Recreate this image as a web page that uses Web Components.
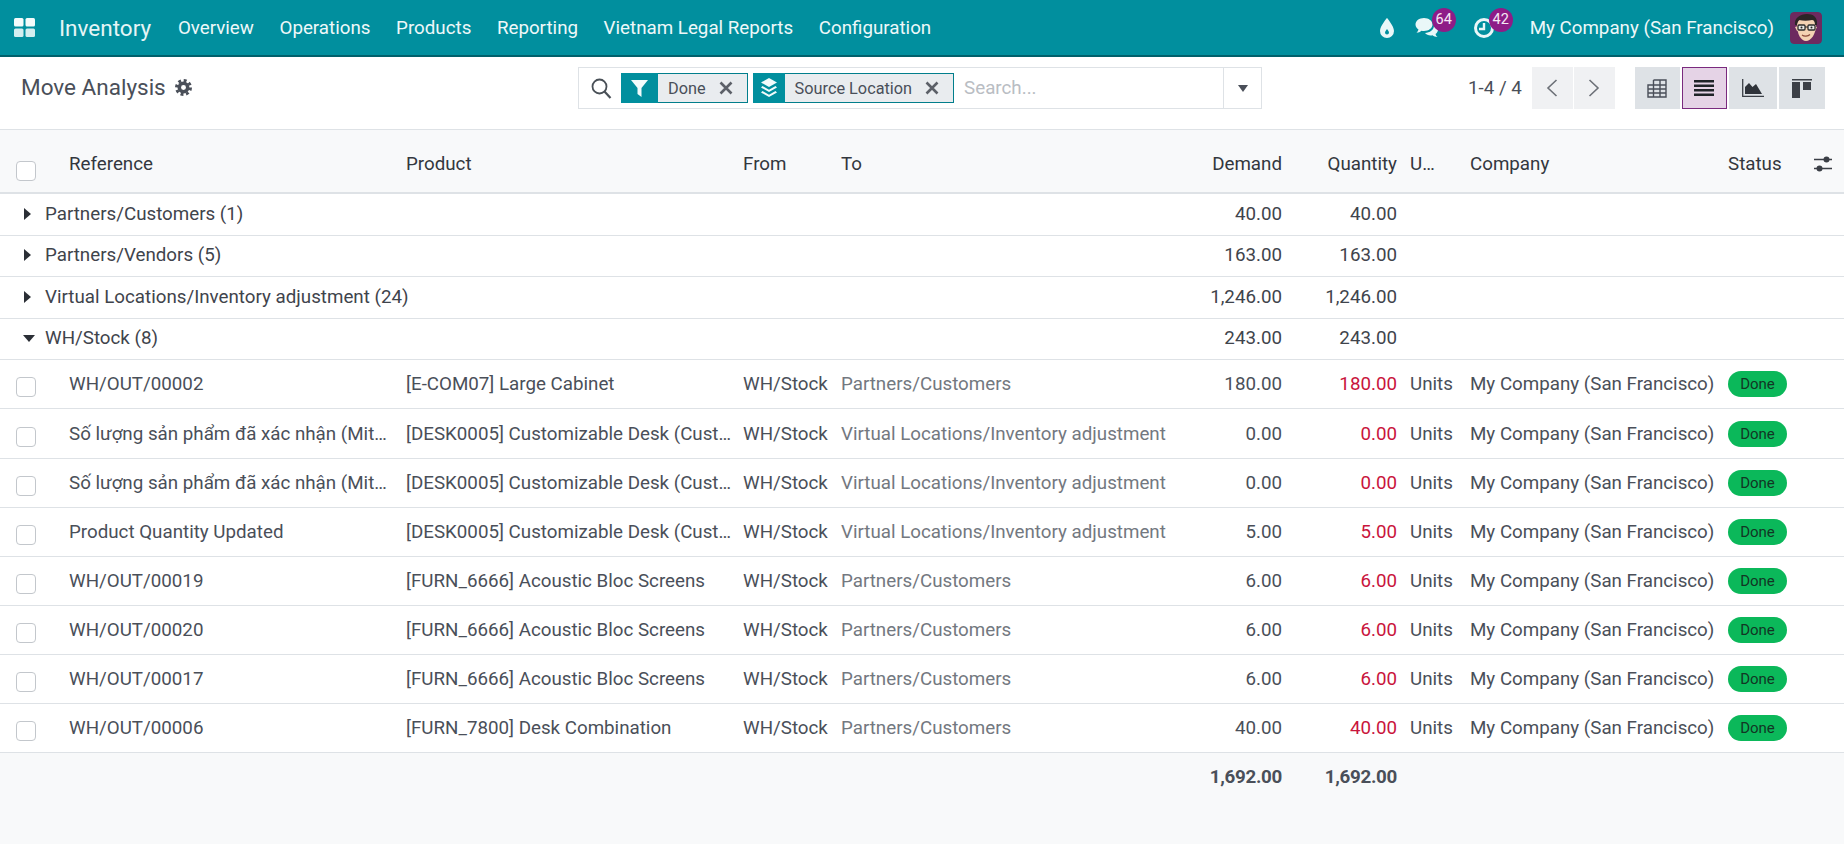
<!DOCTYPE html>
<html>
<head>
<meta charset="utf-8">
<title>Move Analysis</title>
<style>
    html, body { margin: 0; height: 100%; }
    body { font-family: Roboto, "Liberation Sans", sans-serif; color: #4a4f59; background: #fff; }
    #page { display: flex; flex-direction: column; height: 100vh; overflow: hidden; }
</style>
</head>
<body>
<div id="page">
    <app-navbar></app-navbar>
    <control-panel></control-panel>
    <move-list>
        <list-header></list-header>
        <group-row name="Partners/Customers (1)" demand="40.00" quantity="40.00"></group-row>
        <group-row name="Partners/Vendors (5)" demand="163.00" quantity="163.00"></group-row>
        <group-row name="Virtual Locations/Inventory adjustment (24)" demand="1,246.00" quantity="1,246.00"></group-row>
        <group-row name="WH/Stock (8)" demand="243.00" quantity="243.00" open></group-row>
        <move-row ref="WH/OUT/00002" product="[E-COM07] Large Cabinet" to="Partners/Customers" demand="180.00"></move-row>
        <move-row ref="Số lượng sản phẩm đã xác nhận (Mit…" product="[DESK0005] Customizable Desk (Cust…" to="Virtual Locations/Inventory adjustment" demand="0.00"></move-row>
        <move-row ref="Số lượng sản phẩm đã xác nhận (Mit…" product="[DESK0005] Customizable Desk (Cust…" to="Virtual Locations/Inventory adjustment" demand="0.00"></move-row>
        <move-row ref="Product Quantity Updated" product="[DESK0005] Customizable Desk (Cust…" to="Virtual Locations/Inventory adjustment" demand="5.00"></move-row>
        <move-row ref="WH/OUT/00019" product="[FURN_6666] Acoustic Bloc Screens" to="Partners/Customers" demand="6.00"></move-row>
        <move-row ref="WH/OUT/00020" product="[FURN_6666] Acoustic Bloc Screens" to="Partners/Customers" demand="6.00"></move-row>
        <move-row ref="WH/OUT/00017" product="[FURN_6666] Acoustic Bloc Screens" to="Partners/Customers" demand="6.00"></move-row>
        <move-row ref="WH/OUT/00006" product="[FURN_7800] Desk Combination" to="Partners/Customers" demand="40.00"></move-row>
        <list-footer demand="1,692.00" quantity="1,692.00"></list-footer>
    </move-list>
</div>

<template id="navbar-template">
    <style>
        :host { display: flex; align-items: center; height: 55px; flex: none; background: #018f9e; border-bottom: 2px solid #00606b; color: #eef8f9; font-size: 18.75px; }
        .apps { display: block; margin-left: 14px; margin-right: 24px; }
        .brand { font-size: 22.5px; margin-right: 26.8px; color: #e6f5f6; }
        .item { margin-right: 25.6px; white-space: nowrap; }
        .right { margin-left: auto; display: flex; align-items: center; }
        .ico { position: relative; display: flex; }
        .badge { position: absolute; top: -9px; width: 24px; height: 24px; border-radius: 50%; background: #8e1c87; color: #f6e9f5; font-size: 14.5px; display: flex; align-items: center; justify-content: center; }
        .company { white-space: nowrap; margin-left: 35px; margin-right: 16px; }
        .avatar { display: block; margin-right: 22px; border-radius: 4px; }
    </style>
    <svg class="apps" width="21" height="19" viewBox="0 0 21 19">
        <rect x="0" y="0" width="9.5" height="8.5" rx="1.5" fill="#f4fbfb"/>
        <rect x="11.5" y="0" width="9.5" height="8.5" rx="1.5" fill="#f4fbfb"/>
        <rect x="0" y="10.5" width="9.5" height="8.5" rx="1.5" fill="#d3eef0"/>
        <rect x="11.5" y="10.5" width="9.5" height="8.5" rx="1.5" fill="#d3eef0"/>
    </svg>
    <span class="brand">Inventory</span>
    <span class="item">Overview</span>
    <span class="item">Operations</span>
    <span class="item">Products</span>
    <span class="item">Reporting</span>
    <span class="item">Vietnam Legal Reports</span>
    <span class="item">Configuration</span>
    <div class="right">
        <span class="ico" style="margin-right:20px">
            <svg width="16" height="20" viewBox="0 0 16 20">
                <path fill-rule="evenodd" fill="#eaf7f8" d="M8 0C8 0 1 8 1 13a7 7 0 0 0 14 0C15 8 8 0 8 0zM8 11c-1 1.500-2 2.500-2 3.500a2 2 0 0 0 4 0C10 13.500 9 12.500 8 11z"/>
            </svg>
        </span>
        <span class="ico" style="margin-right:34px">
            <svg width="24" height="22" viewBox="0 0 24 22">
                <path fill="#eaf7f8" d="M9 1C4.300 1 .5 3.800.5 7.500c0 2 1.200 3.800 3 5-.3 1.300-1 2.400-2 3.200 2 0 3.800-.8 5-2 .8.200 1.600.3 2.500.3 4.700 0 8.500-2.900 8.500-6.500S13.700 1 9 1z"/>
                <path fill="#eaf7f8" d="M19 8.500c0 4.300-4.200 7.200-9 7.500 1.200 1.500 3.300 2.500 5.600 2.500.7 0 1.300-.1 1.900-.2 1.300 1.100 3 1.700 5 1.700-1-.8-1.700-1.800-2-3 1.500-1.100 2.500-2.600 2.500-4.300 0-1.700-1.600-3.400-4-4.200z"/>
            </svg>
            <span class="badge" style="left:17px">64</span>
        </span>
        <span class="ico">
            <svg width="22" height="22" viewBox="0 0 22 22">
                <circle cx="11" cy="11" r="8.500" fill="none" stroke="#eaf7f8" stroke-width="3"/>
                <path fill="none" stroke="#eaf7f8" stroke-width="2.400" d="M11 6v6H6"/>
            </svg>
            <span class="badge" style="left:16px">42</span>
        </span>
        <span class="company">My Company (San Francisco)</span>
        <svg class="avatar" width="32" height="32" viewBox="0 0 32 32">
            <rect width="32" height="32" rx="4" fill="#6d2a5f"/>
            <path fill="#f3d2b3" d="M7 13c0 9 4 16 9 16s10-7 10-16c0-5-4-7-9-7s-10 2-10 7z"/>
            <path fill="#f3d2b3" d="M5 15l3-1 1 5-2 0zM27 15l-3-1-1 5 2 0z"/>
            <path fill="#2b2526" d="M5 13C4 6 10 2 17 2c6 0 11 3 10 11l-2 0c0-3-1-5-3-5-4 1-9 1-13 0-1 1-2 3-2 5z"/>
            <g fill="#e8e8e4" stroke="#2b2b2b" stroke-width="1.300">
                <rect x="8" y="13" width="7" height="5" rx="1"/>
                <rect x="18" y="13" width="7" height="5" rx="1"/>
            </g>
            <path stroke="#2b2b2b" stroke-width="1.200" fill="none" d="M15 15h3"/>
            <circle cx="11.500" cy="15.500" r="1" fill="#222"/>
            <circle cx="21.500" cy="15.500" r="1" fill="#222"/>
            <path stroke="#8a4a3a" stroke-width="1.200" fill="none" d="M12 23c2 1.500 6 1.500 8-.5"/>
        </svg>
    </div>
</template>

<template id="control-template">
    <style>
        :host { display: flex; align-items: flex-start; padding-top: 10px; height: 62px; flex: none; background: #fff; border-bottom: 1px solid #dee2e6; box-sizing: content-box; }
        .title { width: 578px; height: 40px; flex: none; box-sizing: border-box; padding-left: 21px; display: flex; align-items: center; font-size: 22.5px; color: #4a4f59; }
        .title svg { margin-left: 9px; }
        pager-box { margin-left: 206px; }
        view-switcher { margin-left: 20px; }
    </style>
    <div class="title">Move Analysis
        <svg width="17" height="17" viewBox="0 0 20 20">
            <circle cx="10" cy="10" r="7" fill="#4a4f59"/>
            <circle cx="10" cy="10" r="8.300" fill="none" stroke="#4a4f59" stroke-width="3.400" stroke-dasharray="3.400 3.120"/>
            <circle cx="10" cy="10" r="2.900" fill="#fff"/>
        </svg>
    </div>
    <search-bar></search-bar>
    <pager-box></pager-box>
    <view-switcher></view-switcher>
</template>

<template id="search-template">
    <style>
        :host { display: flex; align-items: center; width: 684px; height: 42px; box-sizing: border-box; border: 1px solid #dee2e6; flex: none; }
        .glass { margin-left: 12px; margin-right: 9px; display: block; }
        facet-tag + facet-tag { margin-left: 5px; }
        .input { flex: 1; margin-left: 10px; font-size: 18.75px; color: #b9bdc3; }
        .more { width: 37px; align-self: stretch; border-left: 1px solid #dee2e6; display: flex; align-items: center; justify-content: center; }
        .more i { width: 0; height: 0; border-left: 5.500px solid transparent; border-right: 5.500px solid transparent; border-top: 7px solid #4a4f59; }
    </style>
    <svg class="glass" width="21" height="21" viewBox="0 0 21 21">
        <circle cx="8.500" cy="8.500" r="7" fill="none" stroke="#495057" stroke-width="1.800"/>
        <path d="M13.500 13.500L19.500 20" stroke="#495057" stroke-width="2.200" fill="none"/>
    </svg>
    <facet-tag label="Done" icon="filter" iconw="37"></facet-tag>
    <facet-tag label="Source Location" icon="layers" iconw="32"></facet-tag>
    <span class="input">Search...</span>
    <span class="more"><i></i></span>
</template>

<template id="facet-template">
    <style>
        :host { display: inline-flex; height: 30px; box-sizing: border-box; border: 1px solid #017e8c; background: #e9ecef; font-size: 16.3px; color: #4a4f59; align-items: center; flex: none; }
        .icon { align-self: stretch; background: #018f9e; display: flex; align-items: center; justify-content: center; margin: -1px 0 -1px -1px; }
        .label { margin-left: 10px; white-space: nowrap; }
        .x { display: block; margin: 0 14px 0 13px; }
    </style>
    <span class="icon"></span>
    <span class="label"></span>
    <svg class="x" width="14" height="14" viewBox="0 0 14 14"><path d="M1.500 1.500L12.500 12.500M12.500 1.500L1.500 12.500" stroke="#5c6068" stroke-width="2.600" fill="none"/></svg>
</template>

<template id="pager-template">
    <style>
        :host { display: flex; align-items: center; flex: none; }
        .count { font-size: 18.75px; color: #4a4f59; margin-right: 10px; white-space: nowrap; }
        .btn { width: 41px; height: 42px; background: #f0f1f3; display: flex; align-items: center; justify-content: center; }
        .btn + .btn { margin-left: 1px; }
    </style>
    <span class="count">1-4 / 4</span>
    <span class="btn"><svg width="12" height="20" viewBox="0 0 12 20"><path d="M10.500 2L2 10l8.500 8" fill="none" stroke="#6c7077" stroke-width="1.600"/></svg></span>
    <span class="btn"><svg width="12" height="20" viewBox="0 0 12 20"><path d="M1.500 2L10 10l-8.500 8" fill="none" stroke="#6c7077" stroke-width="1.600"/></svg></span>
</template>

<template id="views-template">
    <style>
        :host { display: flex; flex: none; }
        .v { height: 42px; background: #dee2e6; display: flex; align-items: center; justify-content: center; box-sizing: border-box; margin-right: 2px; }
        .v:last-child { margin-right: 0; }
        .on { background: #e5d3e6; border: 1px solid #7a2a7e; }
    </style>
    <span class="v" style="width:45px">
        <svg width="20" height="19" viewBox="0 0 20 19">
            <path fill="none" stroke="#4a4f59" stroke-width="1.400" d="M6.500 1h12.500v17H1V6h18M1 10h18M1 14h18M6.500 1v17M13 1v17M1 6h5.500"/>
        </svg>
    </span>
    <span class="v on" style="width:45px">
        <svg width="20" height="16" viewBox="0 0 20 16">
            <path fill="#1f2328" d="M0 0h20v2.500H0zM0 4.500h20V7H0zM0 9h20v2.500H0zM0 13.500h20V16H0z"/>
        </svg>
    </span>
    <span class="v" style="width:48px">
        <svg width="22" height="18" viewBox="0 0 22 18">
            <path fill="none" stroke="#3b3f46" stroke-width="1.300" d="M.7 0v17.300H22"/>
            <path fill="#2f333a" d="M3 15V8l4-4 3.500 4 3.500-3 6 10z"/>
        </svg>
    </span>
    <span class="v" style="width:46px">
        <svg width="20" height="19" viewBox="0 0 20 19">
            <path fill="#3b3f46" d="M0 0h20v1.500H0zM0 3h8v16H0zM11 3h8v8h-8z"/>
        </svg>
    </span>
</template>

<template id="list-template">
    <style>
        :host { display: flex; flex-direction: column; flex: 1; min-height: 0; background: #f8f9fa;
            --cols: 59px 337px 337px 98px 349px 112px 108px 60px 258px 82px 44px; }
    </style>
    <slot></slot>
</template>

<template id="check-template">
    <style>
        :host { display: block; width: 20px; height: 20px; box-sizing: border-box; border: 1px solid #c3c7cc; border-radius: 4px; background: #fff; margin-left: 16px; position: relative; top: 3px; }
    </style>
</template>

<template id="header-template">
    <style>
        :host { display: grid; grid-template-columns: var(--cols); align-items: center; background: #f8f9fa; border-bottom: 2px solid #dee2e6; font-size: 18.75px; color: #33373e; padding-top: 6px; box-sizing: border-box; height: 64px; flex: none; }
        span { padding-left: 10px; white-space: nowrap; }
        .num { text-align: right; padding-left: 0; padding-right: 10px; }
        .qty { padding-right: 3px; }
        svg { display: block; margin-left: 14px; }
        row-check { top: 7px; }
    </style>
    <row-check></row-check>
    <span>Reference</span>
    <span>Product</span>
    <span>From</span>
    <span>To</span>
    <span class="num">Demand</span>
    <span class="num qty">Quantity</span>
    <span>U…</span>
    <span>Company</span>
    <span>Status</span>
    <svg width="18" height="16" viewBox="0 0 18 16">
        <path stroke="#3b3f46" stroke-width="1.300" d="M0 3.500h18M0 12.500h18" fill="none"/>
        <circle cx="12.500" cy="3.500" r="3" fill="#3b3f46"/>
        <circle cx="5.500" cy="12.500" r="3" fill="#3b3f46"/>
    </svg>
</template>

<template id="group-template">
    <style>
        :host { display: grid; grid-template-columns: var(--cols); height: 41.600px; padding-bottom: 1.500px; box-sizing: border-box; flex: none; align-items: center; background: #fff; border-bottom: 1px solid #dee2e6; font-size: 18.75px; color: #3f444c; }
        .name { grid-column: 1 / 6; display: flex; align-items: center; padding-left: 24px; white-space: nowrap; }
        .caret { width: 21px; flex: none; display: flex; }
        .num { text-align: right; padding-right: 10px; }
        .qty { padding-right: 3px; }
    </style>
    <div class="name"><span class="caret"></span><span class="txt"></span></div>
    <span class="num d"></span>
    <span class="num qty q"></span>
</template>

<template id="row-template">
    <style>
        :host { display: grid; grid-template-columns: var(--cols); height: 49.100px; box-sizing: border-box; flex: none; align-items: center; background: #fff; border-bottom: 1px solid #dee2e6; font-size: 18.75px; color: #4a4f59; }
        span { padding-left: 10px; white-space: nowrap; overflow: hidden; }
        .to { color: #737880; }
        .num { text-align: right; padding-left: 0; padding-right: 10px; }
        .qty { padding-right: 3px; color: #c9143c; }
        status-badge { margin-left: 10px; }
    </style>
    <row-check></row-check>
    <span class="ref"></span>
    <span class="prod"></span>
    <span>WH/Stock</span>
    <span class="to"></span>
    <span class="num d"></span>
    <span class="num qty q"></span>
    <span>Units</span>
    <span>My Company (San Francisco)</span>
    <status-badge>Done</status-badge>
</template>

<template id="badge-template">
    <style>
        :host { display: inline-flex; align-items: center; justify-content: center; width: 59px; height: 26px; border-radius: 13px; background: #0bb85a; color: #123524; font-size: 15px; }
    </style>
    <slot></slot>
</template>

<template id="footer-template">
    <style>
        :host { display: grid; grid-template-columns: var(--cols); height: 48px; flex: none; align-items: center; background: #f8f9fa; font-size: 18.75px; font-weight: 700; letter-spacing: -0.3px; color: #4a4f59; }
        .num { text-align: right; padding-right: 10px; }
        .qty { padding-right: 3px; }
    </style>
    <span class="num d" style="grid-column:6"></span>
    <span class="num qty q"></span>
</template>

<script>
    function stamp(el, id) {
        const clone = document.importNode(document.querySelector(id).content, true);
        const root = el.attachShadow({ mode: 'open' });
        root.appendChild(clone);
        return root;
    }

    // plain elements that only clone their template
    const plain = {
        'app-navbar': '#navbar-template',
        'control-panel': '#control-template',
        'search-bar': '#search-template',
        'pager-box': '#pager-template',
        'view-switcher': '#views-template',
        'move-list': '#list-template',
        'row-check': '#check-template',
        'list-header': '#header-template',
        'status-badge': '#badge-template'
    };
    Object.keys(plain).forEach(name => {
        customElements.define(name, class extends HTMLElement {
            constructor() {
                super();
                stamp(this, plain[name]);
            }
        });
    });

    const facetIcons = {
        filter: '<svg width="17" height="17" viewBox="0 0 17 17"><path fill="#f2fbfb" d="M0 0h17L10.500 8v9l-4-3V8z"/></svg>',
        layers: '<svg width="16" height="20" viewBox="0 0 16 20"><path fill="#f2fbfb" d="M8 0l8 4.500L8 9 0 4.500z"/><path fill="#f2fbfb" d="M1.500 8L8 11.700 14.500 8 16 9.500 8 14 0 9.500z"/><path fill="#f2fbfb" d="M1.500 13L8 16.700 14.500 13 16 14.500 8 19 0 14.500z"/></svg>'
    };

    customElements.define('facet-tag', class extends HTMLElement {
        constructor() {
            super();
            stamp(this, '#facet-template');
        }
        connectedCallback() {
            const icon = this.shadowRoot.querySelector('.icon');
            icon.innerHTML = facetIcons[this.getAttribute('icon')];
            icon.style.width = this.getAttribute('iconw') + 'px';
            this.shadowRoot.querySelector('.label').textContent = this.getAttribute('label');
        }
    });

    customElements.define('group-row', class extends HTMLElement {
        constructor() {
            super();
            stamp(this, '#group-template');
        }
        connectedCallback() {
            const r = this.shadowRoot;
            r.querySelector('.txt').textContent = this.getAttribute('name');
            r.querySelector('.d').textContent = this.getAttribute('demand');
            r.querySelector('.q').textContent = this.getAttribute('quantity');
            r.querySelector('.caret').innerHTML = this.hasAttribute('open')
                ? '<svg width="12" height="7" viewBox="0 0 12 7" style="margin-left:-1px"><path fill="#2b2f36" d="M0 0h12L6 7z"/></svg>'
                : '<svg width="7" height="12" viewBox="0 0 7 12"><path fill="#2b2f36" d="M0 0v12l7-6z"/></svg>';
        }
    });

    customElements.define('move-row', class extends HTMLElement {
        constructor() {
            super();
            stamp(this, '#row-template');
        }
        connectedCallback() {
            const r = this.shadowRoot;
            const demand = this.getAttribute('demand');
            r.querySelector('.ref').textContent = this.getAttribute('ref');
            r.querySelector('.prod').textContent = this.getAttribute('product');
            r.querySelector('.to').textContent = this.getAttribute('to');
            r.querySelector('.d').textContent = demand;
            r.querySelector('.q').textContent = demand;
        }
    });

    customElements.define('list-footer', class extends HTMLElement {
        constructor() {
            super();
            stamp(this, '#footer-template');
        }
        connectedCallback() {
            this.shadowRoot.querySelector('.d').textContent = this.getAttribute('demand');
            this.shadowRoot.querySelector('.q').textContent = this.getAttribute('quantity');
        }
    });
</script>
</body>
</html>
